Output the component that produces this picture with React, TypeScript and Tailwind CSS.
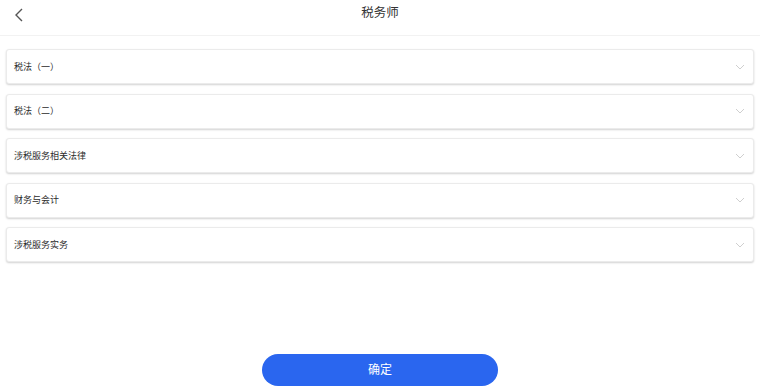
import React from "react";

const subjects = ["税法（一）", "税法（二）", "涉税服务相关法律", "财务与会计", "涉税服务实务"];

const ChevronDown = () => (
  <svg width="10" height="6" viewBox="0 0 10 6" fill="none">
    <polyline points="1,1 5,5 9,1" stroke="#cfcfcf" strokeWidth="1" />
  </svg>
);

const App: React.FC = () => {
  return (
    <div
      className="h-[390px] w-[760px] bg-white flex flex-col overflow-hidden"
      style={{ fontFamily: '"Noto Sans", "Noto Sans CJK SC", sans-serif' }}
    >
      {/* Header */}
      <div className="relative h-[36px] flex items-center justify-center border-b border-[#f2f2f2]">
        <button className="absolute left-[12px] top-[5px] p-[2px]">
          <svg width="10" height="16" viewBox="0 0 10 16" fill="none">
            <polyline points="8,2 2,8 8,14" stroke="#555" strokeWidth="1.4" />
          </svg>
        </button>
        <h1 className="text-[12.5px] text-[#333] leading-none -mt-[9px]">税务师</h1>
      </div>

      {/* Subjects */}
      <div className="px-[6px] pt-[13px] flex flex-col gap-[9.5px]">
        {subjects.map((name) => (
          <div
            key={name}
            className="h-[35px] flex items-center justify-between pl-[7px] pr-[8px] bg-white border border-[#ebebeb] rounded-[3px] shadow-[0_1px_2px_rgba(0,0,0,0.18)]"
          >
            <span className="text-[9px] text-[#2b2b2b]">{name}</span>
            <ChevronDown />
          </div>
        ))}
      </div>

      {/* Confirm */}
      <div className="mt-auto mb-[4px] flex justify-center">
        <button className="w-[236px] h-[32px] rounded-full bg-[#2a66ef] text-white text-[12px]">
          确定
        </button>
      </div>
    </div>
  );
};

export default App;
